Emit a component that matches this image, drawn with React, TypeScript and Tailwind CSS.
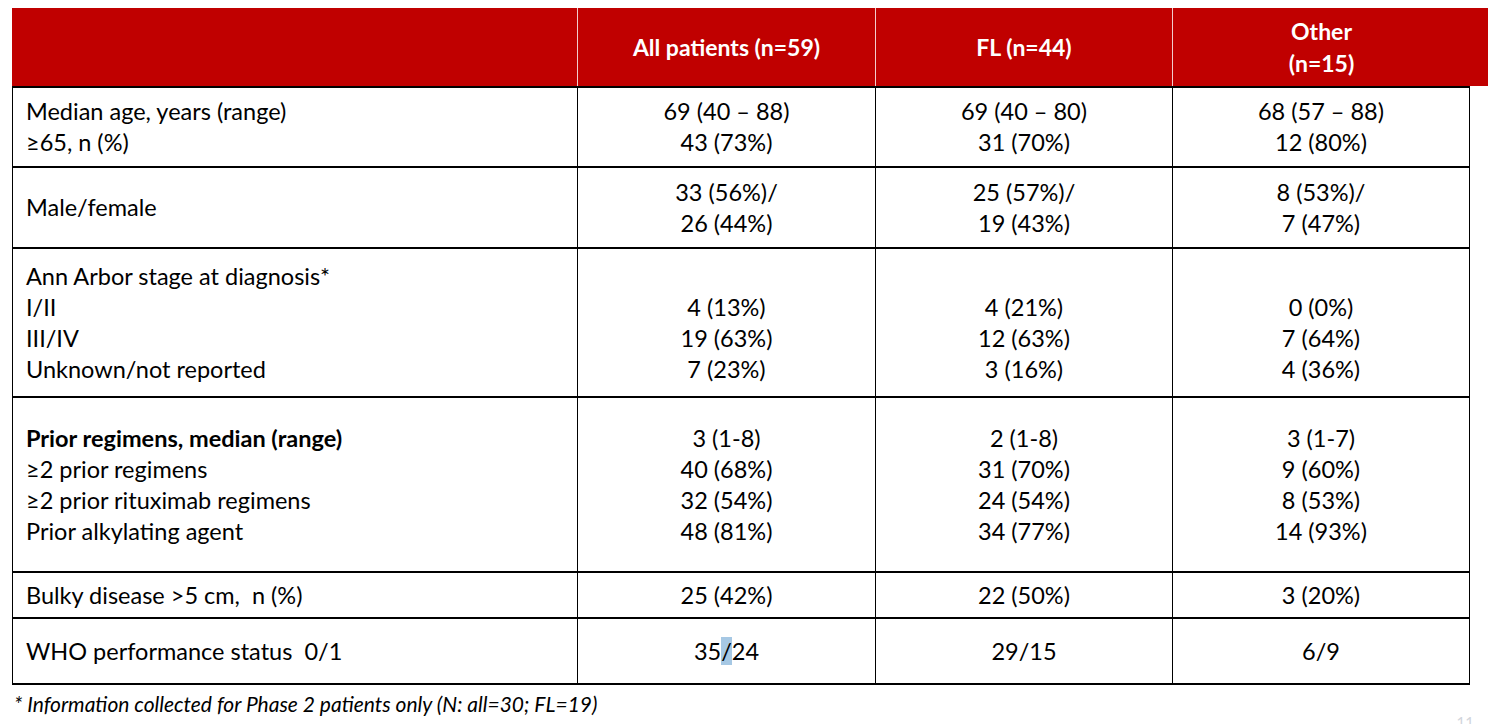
import React from "react";

const font = { fontFamily: "Lato, 'Open Sans', sans-serif" };

type Row = {
  label: React.ReactNode[];
  values: React.ReactNode[][];
  height: string;
};

const rows: Row[] = [
  {
    label: ["Median age, years (range)", "≥65, n (%)"],
    values: [
      ["69 (40 – 88)", "43 (73%)"],
      ["69 (40 – 80)", "31 (70%)"],
      ["68 (57 – 88)", "12 (80%)"],
    ],
    height: "h-[80px]",
  },
  {
    label: ["Male/female"],
    values: [
      ["33 (56%)/", "26 (44%)"],
      ["25 (57%)/", "19 (43%)"],
      ["8 (53%)/", "7 (47%)"],
    ],
    height: "h-[81px]",
  },
  {
    label: ["Ann Arbor stage at diagnosis*", "I/II", "III/IV", "Unknown/not reported"],
    values: [
      ["", "4 (13%)", "19 (63%)", "7 (23%)"],
      ["", "4 (21%)", "12 (63%)", "3 (16%)"],
      ["", "0 (0%)", "7 (64%)", "4 (36%)"],
    ],
    height: "h-[149px]",
  },
  {
    label: [
      <span className="font-bold">Prior regimens, median (range)</span>,
      "≥2 prior regimens",
      "≥2 prior rituximab regimens",
      "Prior alkylating agent",
    ],
    values: [
      ["3 (1-8)", "40 (68%)", "32 (54%)", "48 (81%)"],
      ["2 (1-8)", "31 (70%)", "24 (54%)", "34 (77%)"],
      ["3 (1-7)", "9 (60%)", "8 (53%)", "14 (93%)"],
    ],
    height: "h-[175px]",
  },
  {
    label: ["Bulky disease >5 cm,  n (%)"],
    values: [["25 (42%)"], ["22 (50%)"], ["3 (20%)"]],
    height: "h-[46px]",
  },
  {
    label: ["WHO performance status  0/1"],
    values: [
      [
        <span>
          35<span className="bg-[#a6c8e4]">/</span>24
        </span>,
      ],
      ["29/15"],
      ["6/9"],
    ],
    height: "h-[66px]",
  },
];

const cols = "grid grid-cols-[565px_298px_297px_298px]";

export default function App() {
  return (
    <div className="w-[1488px] h-[724px] bg-white relative overflow-hidden" style={font}>
      <div className="pt-[8px] pl-[12px]">
        <div className={`${cols} h-[78px] bg-[#c00000] text-white font-bold text-[23px] leading-[32px]`}>
          <div />
          <div className="border-l border-white/80 flex items-center justify-center text-center">
            All patients (n=59)
          </div>
          <div className="border-l border-white/80 flex items-center justify-center text-center">
            FL (n=44)
          </div>
          <div className="border-l border-white/80 flex flex-col items-center justify-center text-center">
            <span>Other</span>
            <span>(n=15)</span>
          </div>
        </div>
        <div className="border-t-2 border-black w-[1458px]">
          {rows.map((r, i) => (
            <div
              key={i}
              className={`${cols} ${r.height} border-b-2 border-black text-black text-[23.5px] leading-[31px]`}
            >
              <div className="border-l border-black pl-[13px] flex flex-col justify-center">
                {r.label.map((l, j) => (
                  <div key={j} className="whitespace-pre">
                    {l}
                  </div>
                ))}
              </div>
              {r.values.map((v, k) => (
                <div
                  key={k}
                  className={`border-l border-black flex flex-col justify-center items-center ${
                    k === 2 ? "border-r" : ""
                  }`}
                >
                  {v.map((t, j) => (
                    <div key={j} className="h-[31px]">
                      {t}
                    </div>
                  ))}
                </div>
              ))}
            </div>
          ))}
        </div>
        <div className="pl-[2px] pt-[6px] text-[21px] italic text-black leading-[26px]">
          * Information collected for Phase 2 patients only (N: all=30; FL=19)
        </div>
      </div>
      <div className="absolute right-[14px] top-[711px] text-[15px] text-gray-300">11</div>
    </div>
  );
}
